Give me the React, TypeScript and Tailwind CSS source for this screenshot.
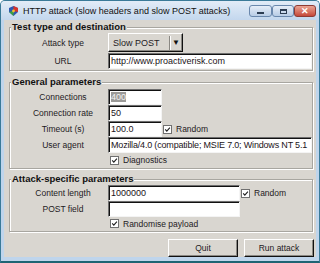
import React from "react";

const Check = () => (
  <svg width="9" height="9" viewBox="0 0 9 9" className="shrink-0">
    <rect x="0.5" y="0.5" width="8" height="8" fill="#fff" stroke="#707070" />
    <path d="M2.2 4.4 L3.8 6.2 L6.9 2.6" fill="none" stroke="#1e1e1e" strokeWidth="1.1" />
  </svg>
);

const Field: React.FC<{ className?: string; children?: React.ReactNode }> = ({ className = "flex-1 min-w-0", children }) => (
  <div
    className={`h-[16px] bg-white border border-t-[#6e6e6e] border-l-[#6e6e6e] border-b-[#f4f4f4] border-r-[#f4f4f4] shadow-[inset_1px_1px_0_#111] pl-[2px] text-[9px] leading-[14px] text-[#1c1420] whitespace-nowrap overflow-hidden ${className}`}
  >
    {children}
  </div>
);

const Row: React.FC<{ label?: string; className?: string; children?: React.ReactNode }> = ({
  label,
  className = "h-[16px]",
  children,
}) => (
  <div className={`flex items-center min-w-0 ${className}`}>
    <div className="w-[86px] shrink-0 mr-[2px] text-center text-[8.5px] leading-[12px]">{label}</div>
    {children}
  </div>
);

const Group: React.FC<{ title: string; className?: string; children?: React.ReactNode }> = ({
  title,
  className = "",
  children,
}) => (
  <fieldset
    className={`ml-[5px] mr-[3px] min-w-0 border border-[#a8a6a0] shadow-[1px_1px_0_#fff,inset_1px_1px_0_#fff] ${className}`}
  >
    <legend className="ml-[1px] px-[1px] bg-[#d9d6d0] text-[9.5px] leading-[12px] font-bold text-[#111]">
      {title}
    </legend>
    <div className="pl-[10px] min-w-0">{children}</div>
  </fieldset>
);

const Checked: React.FC<{ label: string }> = ({ label }) => (
  <div className="flex items-center gap-[4px] text-[8.5px] leading-[12px] whitespace-nowrap">
    <Check />
    <span>{label}</span>
  </div>
);

export default function App() {
  return (
    <div className="w-[320px] h-[263px] flex flex-col bg-[#bfd5ec] border border-[#3a7a98] border-b-2 border-b-[#1f6474] rounded-t-[5px] font-['Liberation_Sans',Arial,sans-serif] text-[#1e1a1e] overflow-hidden">
      {/* title bar */}
      <div className="h-[19px] flex items-start bg-gradient-to-b from-[#e2ecf7] to-[#c3d7ee] pl-[8px] pr-[3px]">
        <svg width="9" height="10" viewBox="0 0 9 10" className="mt-[5px]">
          <path d="M4.5 0 L9 2 L9 6 L4.5 10 L0 6 L0 2 Z" fill="#2e56b0" />
          <path d="M4.5 0 L9 2 L9 6 L4.5 5 Z" fill="#d8332a" />
          <path d="M0 6 L4.5 5 L4.5 10 Z" fill="#3aa040" />
          <circle cx="4.5" cy="5" r="1.4" fill="#f2c230" />
        </svg>
        <span className="ml-[5px] mt-[4px] text-[9px] leading-[12px] text-[#101010] whitespace-nowrap">
          HTTP attack (slow headers and slow POST attacks)
        </span>
        <div className="ml-auto mt-[4px] flex">
          <div className="w-[23px] h-[12px] rounded-[3px] border border-[#6a88ad] bg-gradient-to-b from-[#e6eef8] to-[#b8cce5] flex items-end justify-center pb-[2px]">
            <div className="w-[7px] h-[2px] bg-[#2b3c52]" />
          </div>
          <div className="w-[22px] h-[12px] rounded-[3px] border border-[#6a88ad] bg-gradient-to-b from-[#e6eef8] to-[#b8cce5] flex items-center justify-center">
            <div className="w-[7px] h-[5px] border border-[#2b3c52] border-t-2" />
          </div>
          <div className="w-[22px] h-[12px] rounded-[3px] border border-[#8e3b34] bg-gradient-to-b from-[#eaa494] to-[#c4473a] flex items-center justify-center text-white text-[9px] leading-[10px] font-bold">
            ✕
          </div>
        </div>
      </div>

      {/* client area */}
      <div className="flex-1 min-w-0 mx-[3px] mb-[4px] bg-[#d9d6d0] flex flex-col">
        <Group title="Test type and destination" className="mt-[1px]">
          <Row label="Attack type" className="h-[19px]">
            <div className="w-[75px] h-[19px] flex items-center bg-[#d9d6d0] border border-t-white border-l-white border-b-[#111] border-r-[#111] shadow-[inset_-1px_-1px_0_#8a8883]">
              <span className="flex-1 pl-[4px] text-[9px] leading-[12px]">Slow POST</span>
              <div className="w-[1px] h-[14px] bg-[#8a8883] shadow-[1px_0_0_#fff]" />
              <span className="w-[12px] text-center text-[8px] leading-[10px] text-[#111]">▼</span>
            </div>
          </Row>
          <Row label="URL" className="h-[16px] mt-[1px] mb-[1px]">
            <Field>http://www.proactiverisk.com</Field>
          </Row>
        </Group>

        <Group title="General parameters" className="mt-[5px]">
          <div className="pt-[1px]">
            <Row label="Connections">
              <Field className="w-[54px]">
                <span className="bg-[#9b9a98] text-[#f2f2f2]">400</span>
              </Field>
            </Row>
            <Row label="Connection rate">
              <Field className="w-[54px]">50</Field>
            </Row>
            <Row label="Timeout (s)">
              <Field className="w-[54px]">100.0</Field>
              <div className="ml-[1px]">
                <Checked label="Random" />
              </div>
            </Row>
            <Row label="User agent">
              <Field className="flex-1 min-w-0 tracking-[-0.18px]">
                Mozilla/4.0 (compatible; MSIE 7.0; Windows NT 5.1
              </Field>
            </Row>
            <Row className="h-[14px] mb-[1px]">
              <div className="ml-[2px]">
                <Checked label="Diagnostics" />
              </div>
            </Row>
          </div>
        </Group>

        <Group title="Attack-specific parameters" className="mt-[4px]">
          <Row label="Content length">
            <Field className="w-[132px]">1000000</Field>
            <div className="ml-[1px]">
              <Checked label="Random" />
            </div>
          </Row>
          <Row label="POST field">
            <Field className="w-[132px]" />
          </Row>
          <Row className="h-[13px] mb-[1px]">
            <div className="ml-[2px]">
              <Checked label="Randomise payload" />
            </div>
          </Row>
        </Group>

        <div className="mt-[7px] mr-[2px] flex justify-end gap-[6px]">
          {["Quit", "Run attack"].map((b) => (
            <button
              key={b}
              className="w-[70px] h-[18px] bg-[#d9d6d0] border border-t-white border-l-white border-b-[#111] border-r-[#111] shadow-[inset_-1px_-1px_0_#8a8883] text-[8.5px] leading-[12px] text-[#1e1a1e]"
            >
              {b}
            </button>
          ))}
        </div>
      </div>
    </div>
  );
}
